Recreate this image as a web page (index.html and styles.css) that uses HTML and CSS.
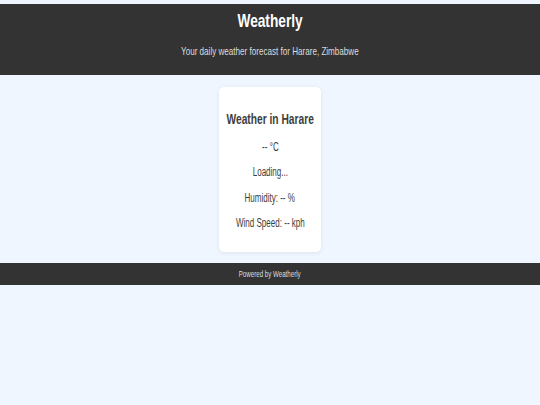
FILE: index.html
```html
<!DOCTYPE html>
<html lang="en">
<head>
<meta charset="utf-8">
<title>Weatherly</title>
<link rel="stylesheet" href="styles.css">
</head>
<body>
<div class="page">
  <header class="site-header">
    <h1 class="title">Weatherly</h1>
    <p class="tagline">Your daily weather forecast for Harare, Zimbabwe</p>
  </header>
  <main class="main">
    <section class="card">
      <h2 class="card-title">Weather in Harare</h2>
      <p class="line">-- °C</p>
      <p class="line">Loading...</p>
      <p class="line">Humidity: -- %</p>
      <p class="line">Wind Speed: -- kph</p>
    </section>
  </main>
  <footer class="site-footer"><span class="credit">Powered by Weatherly</span></footer>
</div>
</body>
</html>
```
FILE: styles.css
```css
html, body {
  margin: 0;
  padding: 0;
  background: #eff6ff;
  font-family: "Liberation Sans", Arial, sans-serif;
}
.page {
  padding-top: 4px;
}
.site-header {
  background: #333333;
  color: #ffffff;
  padding: 6px 0 17px;
  display: flex;
  flex-direction: column;
  align-items: center;
}
.title {
  margin: 0;
  font-size: 18.5px;
  line-height: 22px;
  font-weight: bold;
  white-space: nowrap;
  transform: scaleX(0.74);
}
.tagline {
  margin: 12px 0 0;
  font-size: 11px;
  line-height: 14px;
  color: #dddddd;
  white-space: nowrap;
  transform: scaleX(0.735);
}
.main {
  padding: 12px 0 11px;
  display: flex;
  justify-content: center;
}
.card {
  width: 102px;
  box-sizing: border-box;
  background: #ffffff;
  border-radius: 5px;
  box-shadow: 0 1px 5px rgba(0, 0, 0, 0.08);
  padding: 23px 0 22px;
  color: #3d3d3d;
  display: flex;
  flex-direction: column;
  align-items: center;
  gap: 11.5px;
}
.card-title {
  margin: 0;
  font-size: 15.5px;
  line-height: 18px;
  font-weight: bold;
  white-space: nowrap;
  transform: scaleX(0.66);
}
.line {
  margin: 0;
  font-size: 12px;
  line-height: 14px;
  white-space: nowrap;
  transform: scaleX(0.67);
}
.site-footer {
  background: #333333;
  color: #dddddd;
  height: 22px;
  display: flex;
  justify-content: center;
  align-items: center;
}
.credit {
  font-size: 9.5px;
  line-height: 22px;
  white-space: nowrap;
  transform: scaleX(0.65);
}
```
